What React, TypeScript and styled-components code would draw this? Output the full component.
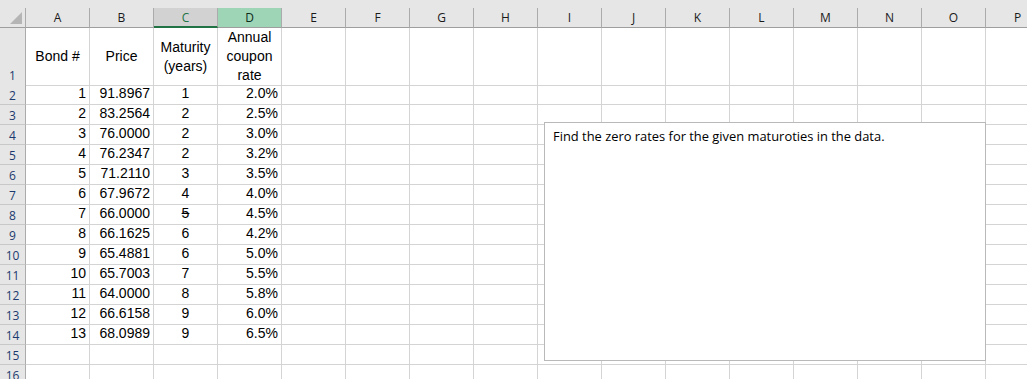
import React from "react";
import styled, { createGlobalStyle, css } from "styled-components";

const Global = createGlobalStyle`
  html, body { margin: 0; padding: 0; background: #fff; }
  body { width: 1027px; height: 379px; overflow: hidden; }
`;

const COLS = ["A", "B", "C", "D", "E", "F", "G", "H", "I", "J", "K", "L", "M", "N", "O", "P"];

type Bond = { n: number; price: string; mat: number; rate: string; strike?: boolean };
const BONDS: Bond[] = [
  { n: 1, price: "91.8967", mat: 1, rate: "2.0%" },
  { n: 2, price: "83.2564", mat: 2, rate: "2.5%" },
  { n: 3, price: "76.0000", mat: 2, rate: "3.0%" },
  { n: 4, price: "76.2347", mat: 2, rate: "3.2%" },
  { n: 5, price: "71.2110", mat: 3, rate: "3.5%" },
  { n: 6, price: "67.9672", mat: 4, rate: "4.0%" },
  { n: 7, price: "66.0000", mat: 5, rate: "4.5%", strike: true },
  { n: 8, price: "66.1625", mat: 6, rate: "4.2%" },
  { n: 9, price: "65.4881", mat: 6, rate: "5.0%" },
  { n: 10, price: "65.7003", mat: 7, rate: "5.5%" },
  { n: 11, price: "64.0000", mat: 8, rate: "5.8%" },
  { n: 12, price: "66.6158", mat: 9, rate: "6.0%" },
  { n: 13, price: "68.0989", mat: 9, rate: "6.5%" },
];

const Sheet = styled.div`
  position: relative;
  width: 1027px;
  height: 379px;
  overflow: hidden;
  background: #fff;
`;

const TopBand = styled.div`
  height: 8px;
  background: #e6e6e6;
`;

const Row = styled.div<{ $h: number }>`
  display: grid;
  grid-template-columns: 26px repeat(16, 64px);
  height: ${(p) => p.$h}px;
`;

const Corner = styled.div`
  position: relative;
  background: #e6e6e6;
  border-right: 1px solid #ababab;
  border-bottom: 1px solid #9e9e9e;
  box-sizing: border-box;
`;

const Triangle = styled.div`
  position: absolute;
  right: 3px;
  bottom: 3px;
  width: 0;
  height: 0;
  border-left: 12px solid transparent;
  border-bottom: 12px solid #b5b5b5;
`;

type HeadState = "normal" | "selected" | "highlight";

const ColHead = styled.div<{ $state: HeadState }>`
  box-sizing: border-box;
  display: flex;
  align-items: center;
  justify-content: center;
  background: #e6e6e6;
  border-right: 1px solid #ababab;
  border-bottom: 1px solid #9e9e9e;
  font-family: "Open Sans", "Noto Sans", sans-serif;
  font-size: 12px;
  color: #1a1a1a;
  ${(p) =>
    p.$state === "selected" &&
    css`
      background: #d2d2d2;
      border-bottom: 2px solid #217346;
      color: #217346;
    `}
  ${(p) =>
    p.$state === "highlight" &&
    css`
      background: #9fd5b7;
      color: #0e2a1a;
    `}
`;

const RowHead = styled.div<{ $bottom?: boolean }>`
  box-sizing: border-box;
  display: flex;
  justify-content: center;
  align-items: ${(p) => (p.$bottom ? "flex-end" : "center")};
  padding-bottom: ${(p) => (p.$bottom ? "1px" : "0")};
  padding-top: ${(p) => (p.$bottom ? "0" : "1px")};
  background: #e6e6e6;
  border-right: 1px solid #ababab;
  border-bottom: 1px solid #c8c8c8;
  font-family: "Open Sans", "Noto Sans", sans-serif;
  font-size: 12px;
  color: #1c3a6e;
`;

type Align = "left" | "right" | "center";

const Cell = styled.div<{ $align?: Align; $wrap?: boolean }>`
  box-sizing: border-box;
  display: flex;
  align-items: ${(p) => (p.$wrap ? "center" : "flex-end")};
  justify-content: ${(p) =>
    p.$align === "right" ? "flex-end" : p.$align === "center" ? "center" : "flex-start"};
  text-align: ${(p) => p.$align ?? "left"};
  padding: ${(p) => (p.$wrap ? "0 2px" : "0 3px 3px 3px")};
  border-right: 1px solid #d4d4d4;
  border-bottom: 1px solid #d4d4d4;
  font-family: "Liberation Sans", Arial, sans-serif;
  font-size: 14px;
  line-height: ${(p) => (p.$wrap ? "19px" : "16px")};
  color: #000;
  white-space: nowrap;
`;

const Struck = styled.span`
  text-decoration: line-through;
`;

const TextBox = styled.div`
  position: absolute;
  left: 544px;
  top: 122px;
  width: 442px;
  height: 239px;
  box-sizing: border-box;
  border: 1px solid #b9b9b9;
  background: #fff;
  padding: 4px 8px;
  font-family: "Open Sans", "Noto Sans", sans-serif;
  font-size: 12.9px;
  color: #000;
`;

const emptyCells = (from: number) =>
  COLS.slice(from).map((c) => <Cell key={c} />);

export default function App() {
  return (
    <>
      <Global />
      <Sheet>
        <TopBand />
        <Row $h={20}>
          <Corner>
            <Triangle />
          </Corner>
          {COLS.map((c) => (
            <ColHead
              key={c}
              $state={c === "C" ? "selected" : c === "D" ? "highlight" : "normal"}
            >
              {c}
            </ColHead>
          ))}
        </Row>
        <Row $h={57}>
          <RowHead $bottom>1</RowHead>
          <Cell $align="center" $wrap>Bond #</Cell>
          <Cell $align="center" $wrap>Price</Cell>
          <Cell $align="center" $wrap>
            Maturity
            <br />
            (years)
          </Cell>
          <Cell $align="center" $wrap>
            Annual
            <br />
            coupon
            <br />
            rate
          </Cell>
          {emptyCells(4)}
        </Row>
        {BONDS.map((b, i) => (
          <Row $h={20} key={b.n}>
            <RowHead>{i + 2}</RowHead>
            <Cell $align="right">{b.n}</Cell>
            <Cell $align="right">{b.price}</Cell>
            <Cell $align="center">{b.strike ? <Struck>{b.mat}</Struck> : b.mat}</Cell>
            <Cell $align="right">{b.rate}</Cell>
            {emptyCells(4)}
          </Row>
        ))}
        {[15, 16].map((r) => (
          <Row $h={20} key={r}>
            <RowHead>{r}</RowHead>
            {emptyCells(0)}
          </Row>
        ))}
        <TextBox>Find the zero rates for the given maturoties in the data.</TextBox>
      </Sheet>
    </>
  );
}
